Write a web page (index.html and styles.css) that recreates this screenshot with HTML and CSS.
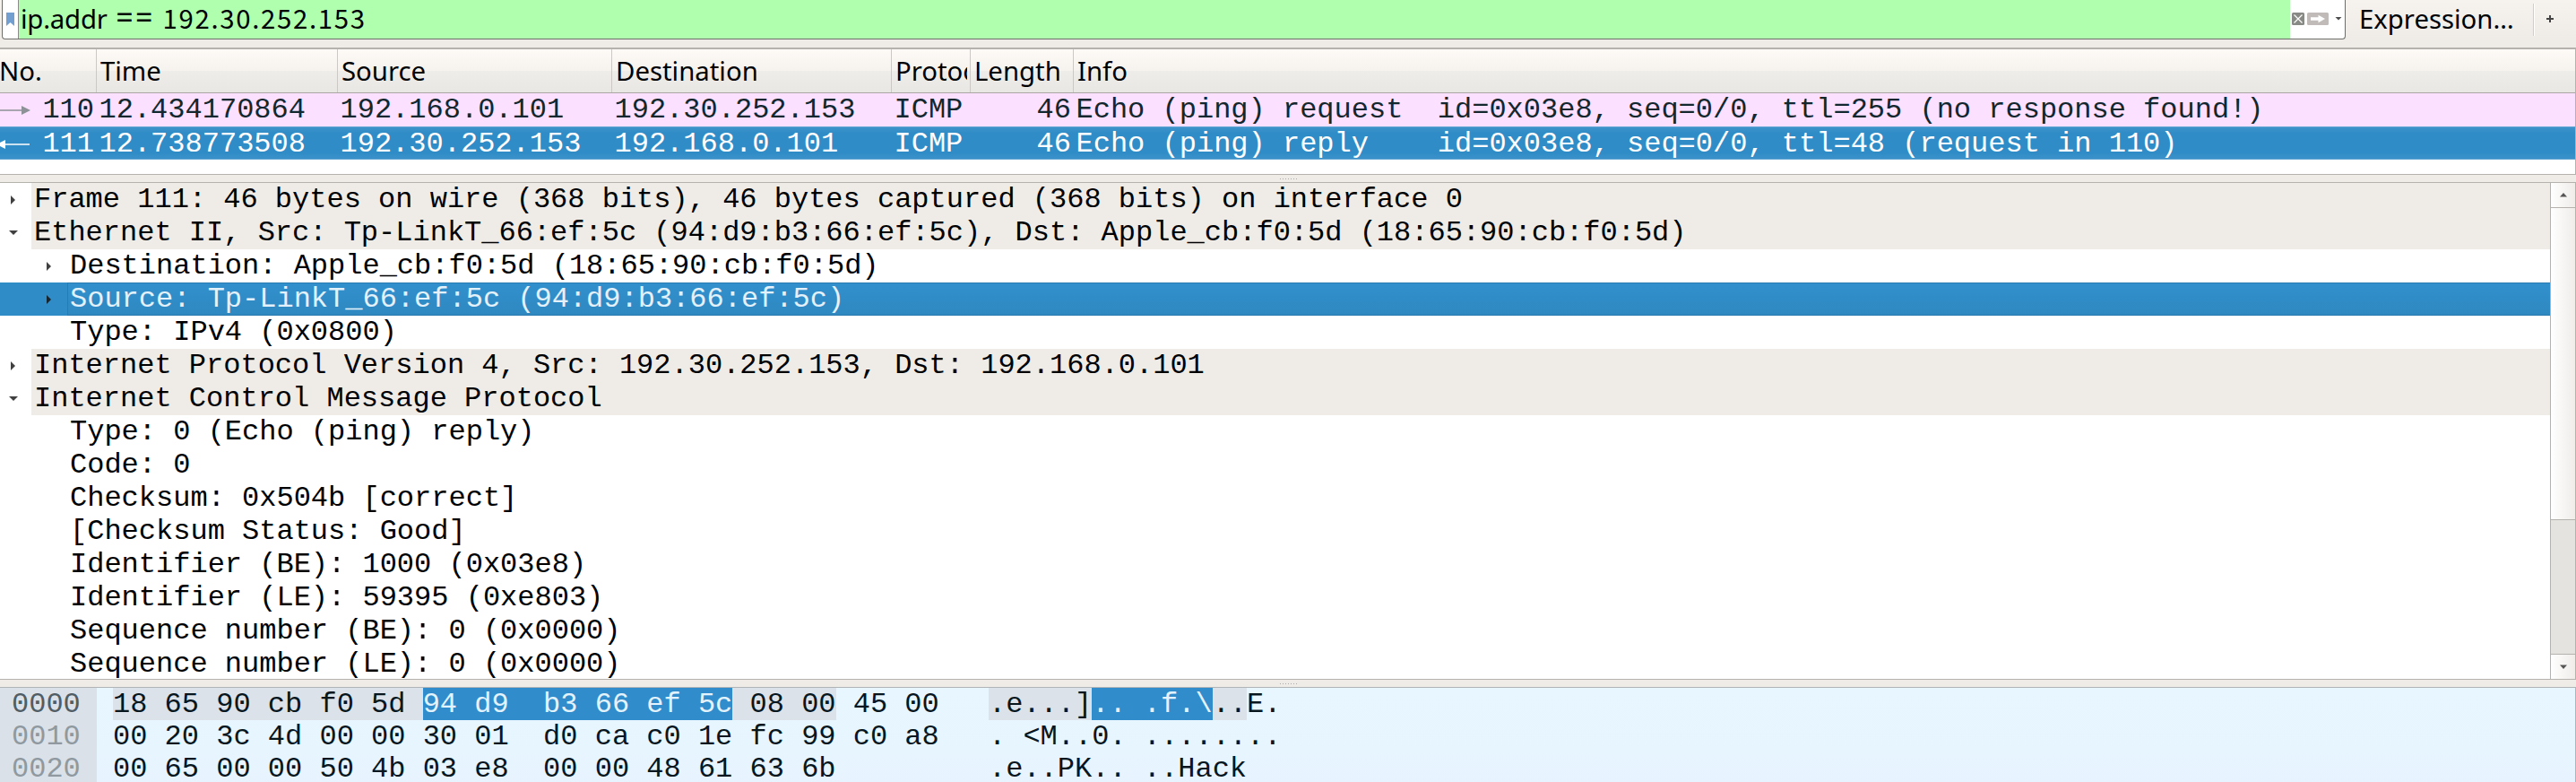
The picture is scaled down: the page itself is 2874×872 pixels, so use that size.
FILE: index.html
```html
<!DOCTYPE html>
<html lang="en">
<head>
<meta charset="utf-8">
<title>Packet capture</title>
<link rel="stylesheet" href="styles.css">
</head>
<body>
<div class="app">
  <div class="toolbar">
    <div class="filter">
      <div class="bookmark"><svg width="9" height="15" viewBox="0 0 9 15"><path d="M0 0h9v15l-4.500-4L0 15z" fill="#729fcf"/></svg></div>
      <div class="query">ip.addr <span class="eq">==</span> <span class="addr">192.30.252.153</span></div>
      <div class="filter-tools">
        <svg width="59" height="14" viewBox="0 0 59 14">
          <rect width="14" height="14" rx="1.500" fill="#888a85"/>
          <path d="M2.500 2.500l9 9M11.500 2.500l-9 9" stroke="#fff" stroke-width="1.200"/>
          <rect x="17" width="24" height="14" rx="1.500" fill="#c0bbb8"/>
          <path d="M21 5.200h8.500V2.700l7.500 4.300-7.500 4.300V8.800H21z" fill="#fff"/>
          <path d="M48.500 5h7l-3.500 3.500z" fill="#4d4d4d"/>
        </svg>
      </div>
    </div>
    <div class="expression">Expression…</div>
    <div class="divider"></div>
    <svg class="plus" width="8" height="8" viewBox="0 0 8 8"><path d="M0 4h8M4 0v8" stroke="#444" stroke-width="2"/></svg>
  </div>

  <div class="packets">
    <div class="cols head">
      <div class="h no">No.</div><div class="h">Time</div><div class="h">Source</div><div class="h">Destination</div><div class="h"><span class="clip">Protocol</span></div><div class="h">Length</div><div class="h">Info</div>
    </div>
    <div class="cols row pink">
      <div class="num"><svg class="arrow" width="34" height="12" viewBox="0 0 34 12"><path d="M0 6h25" stroke="#8c9296" stroke-width="1.500"/><path d="M24 1l10 5-10 5z" fill="#8c9296"/></svg>110</div><div>12.434170864</div><div>192.168.0.101</div><div>192.30.252.153</div><div>ICMP</div><div class="num">46</div><div>Echo (ping) request  id=0x03e8, seq=0/0, ttl=255 (no response found!)</div>
    </div>
    <div class="cols row chosen">
      <div class="num"><svg class="arrow" width="34" height="12" viewBox="0 0 34 12"><path d="M5 6h28" stroke="#fff" stroke-width="1.500"/><path d="M6 1L-4 6l10 5z" fill="#fff"/></svg>111</div><div>12.738773508</div><div>192.30.252.153</div><div>192.168.0.101</div><div>ICMP</div><div class="num">46</div><div>Echo (ping) reply    id=0x03e8, seq=0/0, ttl=48 (request in 110)</div>
    </div>
  </div>

  <div class="splitter"><i></i></div>

  <div class="details">
    <div class="tree">
      <div class="node"><b class="shut"></b><span class="band">Frame 111: 46 bytes on wire (368 bits), 46 bytes captured (368 bits) on interface 0</span></div>
      <div class="node"><b class="open"></b><span class="band">Ethernet II, Src: Tp-LinkT_66:ef:5c (94:d9:b3:66:ef:5c), Dst: Apple_cb:f0:5d (18:65:90:cb:f0:5d)</span></div>
      <div class="node sub"><b class="shut"></b><span>Destination: Apple_cb:f0:5d (18:65:90:cb:f0:5d)</span></div>
      <div class="node sub picked"><b class="shut"></b><span>Source: Tp-LinkT_66:ef:5c (94:d9:b3:66:ef:5c)</span></div>
      <div class="node sub"><b></b><span>Type: IPv4 (0x0800)</span></div>
      <div class="node"><b class="shut"></b><span class="band">Internet Protocol Version 4, Src: 192.30.252.153, Dst: 192.168.0.101</span></div>
      <div class="node"><b class="open"></b><span class="band">Internet Control Message Protocol</span></div>
      <div class="node sub"><b></b><span>Type: 0 (Echo (ping) reply)</span></div>
      <div class="node sub"><b></b><span>Code: 0</span></div>
      <div class="node sub"><b></b><span>Checksum: 0x504b [correct]</span></div>
      <div class="node sub"><b></b><span>[Checksum Status: Good]</span></div>
      <div class="node sub"><b></b><span>Identifier (BE): 1000 (0x03e8)</span></div>
      <div class="node sub"><b></b><span>Identifier (LE): 59395 (0xe803)</span></div>
      <div class="node sub"><b></b><span>Sequence number (BE): 0 (0x0000)</span></div>
      <div class="node sub"><b></b><span>Sequence number (LE): 0 (0x0000)</span></div>
    </div>
    <div class="scrollbar">
      <div class="step"><svg width="8" height="5" viewBox="0 0 8 5"><path d="M0 4.500L4 0l4 4.500z" fill="#555"/></svg></div>
      <div class="thumb"></div>
      <div class="trough"></div>
      <div class="step"><svg width="8" height="5" viewBox="0 0 8 5"><path d="M0 .5L4 5 8 .5z" fill="#555"/></svg></div>
    </div>
  </div>

  <div class="splitter"><i></i></div>

  <div class="bytes">
    <div class="offsets"><div class="now">0000</div><div>0010</div><div>0020</div></div>
    <div class="hex">
      <div><span class="field">18 65 90 cb f0 5d </span><span class="sel">94 d9  b3 66 ef 5c</span><span class="field"> 08 00</span> 45 00</div>
      <div>00 20 3c 4d 00 00 30 01  d0 ca c0 1e fc 99 c0 a8</div>
      <div>00 65 00 00 50 4b 03 e8  00 00 48 61 63 6b</div>
    </div>
    <div class="ascii">
      <div><span class="field">.e...]</span><span class="sel">.. .f.\</span><span class="field">..</span>E.</div>
      <div>. &lt;M..0. ........</div>
      <div>.e..PK.. ..Hack</div>
    </div>
  </div>
</div>
</body>
</html>
```
FILE: styles.css
```css
* { box-sizing: border-box; }
body { margin: 0; background: #efebe7; color: #000; overflow: hidden; }
svg { display: block; flex: none; }
.app {
  width: 2874px; height: 872px; overflow: hidden;
  display: flex; flex-direction: column;
  font: 32px/37px "Liberation Mono", monospace;
}
.app > * { flex: none; }

/* filter toolbar */
.toolbar {
  height: 53px; display: flex; align-items: flex-start;
  background: linear-gradient(#f6f3ef, #efebe7 80%);
  font: 29.33px/42px "Noto Sans", sans-serif;
}
.filter {
  width: 2615px; height: 44px; margin-left: 2px; display: flex; overflow: hidden;
  border: 1px solid #6d6d6a; border-top: 0; border-radius: 0 0 4px 4px; background: #fff;
}
.bookmark { width: 18px; flex: none; padding: 14px 0 0 4px; border-right: 1px solid #8a8a86; }
.query { width: 2534px; flex: none; padding-left: 2px; background: #afffaf; white-space: pre; letter-spacing: -.2px; }
.eq { margin-left: 2px; font-size: 34px; line-height: 30px; letter-spacing: 2.500px; }
.addr { margin-left: 1px; font-family: "Noto Sans CJK SC", "Noto Sans", sans-serif; line-height: 30px; letter-spacing: 1.700px; }
.filter-tools { padding: 14px 0 0 2px; }
.expression { margin-left: 15px; width: 194px; }
.divider { width: 2px; height: 36px; margin-top: 4px; background: #cfccc9; border-right: 1px solid #fff; }
.plus { margin: 17px 0 0 13px; }

/* packet list */
.packets { height: 142px; border: solid #b5b2ae; border-width: 2px 1px 1px 0; background: #fff; }
.cols { display: grid; grid-template-columns: 108px 269px 306px 312px 88px 115px 1fr; }
.head {
  height: 49px; border-bottom: 1px solid #a9a6a3;
  background: linear-gradient(#fdfaf7, #f6f3ee 50%, #efedea 50%, #e9e7e4);
  font: 29.33px/48px "Noto Sans", sans-serif;
}
.h { padding-left: 4px; border-right: 1px solid #cbc8c5; overflow: hidden; }
.h:last-child { border-right: 0; }
.h.no { padding: 0; text-indent: -1px; }
.clip { display: block; width: 80px; overflow: hidden; }
.row > div { padding-left: 2.500px; white-space: pre; }
.row > .num { padding: 0 3px 0 0; display: flex; justify-content: flex-end; align-items: center; }
.arrow { margin-right: auto; }
.pink { background: #fbe0ff; color: #12272e; }
.chosen {
  height: 37px; color: #fff; line-height: 39px;
  background: linear-gradient(#62a6d4 1px, #3e93cb 1px, #308cc6 20%, #308cc6 80%, #3b92ca 36px, #62a6d4 36px);
}

.splitter { height: 8px; background: #efebe7; display: flex; justify-content: center; align-items: center; }
.splitter i { width: 19px; height: 1px; background: repeating-linear-gradient(90deg, #aaa 0 1px, transparent 1px 3px); }

/* protocol tree */
.details { height: 555px; display: flex; border: solid #b5b2ae; border-width: 1px 1px 1px 0; background: #fff; }
.tree { width: 2845px; height: 553px; overflow: hidden; }
.node { display: flex; height: 37px; }
.node b { width: 35px; flex: none; display: flex; align-items: center; padding-left: 12px; }
.sub b { width: 75px; padding-left: 52px; }
.node span { flex: 1; padding-left: 3px; white-space: pre; }
.band { background: #efebe7; }
.shut::before { content: ""; border-left: 5px solid #404040; border-top: 5px solid transparent; border-bottom: 5px solid transparent; }
.open::before { content: ""; margin-left: -2px; border-top: 5px solid #404040; border-left: 5px solid transparent; border-right: 5px solid transparent; }
.picked { background: #308cc6; color: #e3f1fb; }
.picked span { background: linear-gradient(#3190cd, #2f88c0); box-shadow: inset 1px 1px #2a7cb0, inset 0 -1px #2a7cb0; }
.picked .shut::before { border-left-color: #16252e; }
.scrollbar { width: 28px; display: flex; flex-direction: column; border-left: 1px solid #b5b2ae; }
.step { height: 27px; display: flex; justify-content: center; align-items: center; background: linear-gradient(90deg, #fff, #f3f1ef 75%, #f1ece8); }
.thumb { height: 349px; border: solid #b5b2ae; border-width: 1px 0; background: linear-gradient(90deg, #fff, #f3f1ef 75%, #f1ece8); }
.trough { height: 150px; background: #e4e3df; border-bottom: 1px solid #b5b2ae; }

/* packet bytes */
.bytes {
  height: 106px; display: flex; line-height: 38px; overflow: hidden; color: #08161e;
  border: solid #b0b4b6; border-width: 1px 1px 0 0;
  background: linear-gradient(#e7f6ff, #e7f5ff 70px, #e7f4ff);
}
.offsets { width: 108px; height: 105px; padding-left: 13px; background: #dae1e9; color: #8f999f; }
.offsets .now { color: #515d64; }
.hex { width: 977px; margin-left: 18px; }
.offsets > div, .hex > div, .ascii > div { height: 36px; white-space: pre; }
.field, .sel { display: inline-block; height: 36px; vertical-align: top; }
.field { background: #dbe2e9; }
.sel { background: #308ccb; color: #e3f3fd; }
```
